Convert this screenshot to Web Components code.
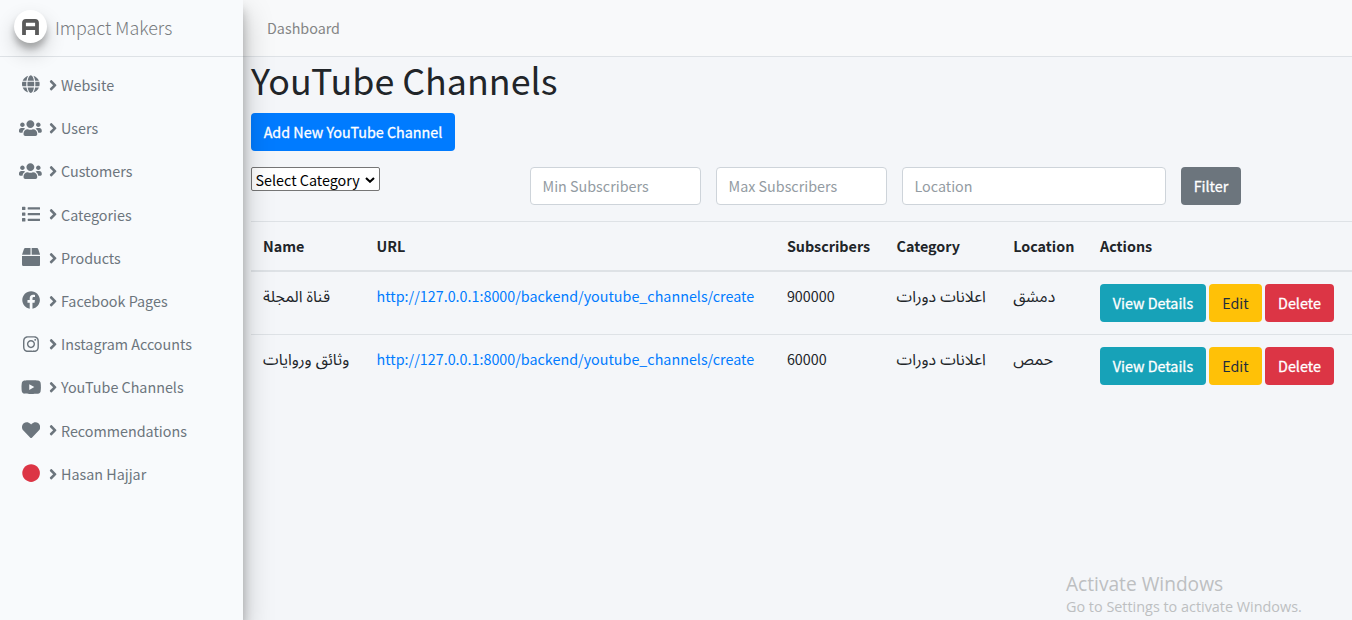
<!DOCTYPE html>
<html lang="en">
<head>
<meta charset="utf-8">
<title>YouTube Channels</title>
<style>
html,body{margin:0;height:100%;overflow:hidden}
body{background:#f4f6f9;color:#212529;font:14.33px/24px "Noto Sans CJK SC","DejaVu Sans",sans-serif}
</style>
</head>
<body>
<admin-page></admin-page>
<script>
const ICONS={
globe:[496,'M336.5 160C322 70.7 287.8 8 248 8s-74 62.7-88.5 152h177zM152 256c0 22.2 1.2 43.5 3.3 64h185.3c2.1-20.5 3.3-41.8 3.3-64s-1.2-43.5-3.3-64H155.3c-2.1 20.5-3.3 41.8-3.3 64zm324.7-96c-28.6-67.9-86.5-120.4-158-141.6 24.4 33.8 41.2 84.7 50 141.6h108zM177.2 18.4C105.8 39.6 47.8 92.1 19.3 160h108c8.7-56.9 25.5-107.8 49.9-141.6zM487.4 192H372.7c2.1 21 3.3 42.5 3.3 64s-1.2 43-3.3 64h114.6c5.5-20.5 8.6-41.8 8.6-64s-3.1-43.5-8.5-64zM120 256c0-21.5 1.2-43 3.3-64H8.6C3.2 212.5 0 233.8 0 256s3.2 43.5 8.6 64h114.6c-2-21-3.2-42.5-3.2-64zm39.5 96c14.5 89.3 48.7 152 88.5 152s74-62.7 88.5-152h-177zm159.3 141.6c71.4-21.2 129.4-73.7 158-141.6h-108c-8.8 56.9-25.6 107.8-50 141.6zM19.3 352c28.6 67.9 86.5 120.4 158 141.6-24.4-33.8-41.2-84.7-50-141.6h-108z'],
users:[640,'M96 224c35.3 0 64-28.7 64-64s-28.7-64-64-64-64 28.7-64 64 28.7 64 64 64zm448 0c35.3 0 64-28.7 64-64s-28.7-64-64-64-64 28.7-64 64 28.7 64 64 64zm32 32h-64c-17.6 0-33.5 7.1-45.1 18.6 40.3 22.1 68.9 62 75.1 109.4h66c17.7 0 32-14.3 32-32v-32c0-35.3-28.7-64-64-64zm-256 0c61.9 0 112-50.1 112-112S381.9 32 320 32 208 82.1 208 144s50.1 112 112 112zm76.8 32h-8.3c-20.8 10-43.9 16-68.5 16s-47.6-6-68.5-16h-8.3C179.6 288 128 339.6 128 403.2V432c0 26.5 21.5 48 48 48h288c26.5 0 48-21.5 48-48v-28.8c0-63.6-51.6-115.2-115.2-115.2zm-223.7-13.4C161.5 263.1 145.6 256 128 256H64c-35.3 0-64 28.7-64 64v32c0 17.7 14.3 32 32 32h65.9c6.3-47.4 34.9-87.3 75.2-109.4z'],
list:[512,'M80 368H16a16 16 0 0 0-16 16v64a16 16 0 0 0 16 16h64a16 16 0 0 0 16-16v-64a16 16 0 0 0-16-16zm0-320H16A16 16 0 0 0 0 64v64a16 16 0 0 0 16 16h64a16 16 0 0 0 16-16V64a16 16 0 0 0-16-16zm0 160H16a16 16 0 0 0-16 16v64a16 16 0 0 0 16 16h64a16 16 0 0 0 16-16v-64a16 16 0 0 0-16-16zm416 176H176a16 16 0 0 0-16 16v32a16 16 0 0 0 16 16h320a16 16 0 0 0 16-16v-32a16 16 0 0 0-16-16zm0-320H176a16 16 0 0 0-16 16v32a16 16 0 0 0 16 16h320a16 16 0 0 0 16-16V80a16 16 0 0 0-16-16zm0 160H176a16 16 0 0 0-16 16v32a16 16 0 0 0 16 16h320a16 16 0 0 0 16-16v-32a16 16 0 0 0-16-16z'],
box:[512,'M509.5 184.6L458.9 32.8C452.4 13.2 434.1 0 413.4 0H272v192h238.7c-.4-2.5-.4-5-1.2-7.4zM240 0H98.6c-20.7 0-39 13.2-45.5 32.8L2.5 184.6c-.8 2.4-.8 4.9-1.2 7.4H240V0zM0 224v240c0 26.5 21.5 48 48 48h416c26.5 0 48-21.5 48-48V224H0z'],
facebook:[512,'M504 256C504 119 393 8 256 8S8 119 8 256c0 123.78 90.69 226.38 209.25 245V327.69h-63V256h63v-54.64c0-62.15 37-96.48 93.67-96.48 27.14 0 55.52 4.84 55.52 4.84v61h-31.28c-30.8 0-40.41 19.12-40.41 38.73V256h68.78l-11 71.69h-57.78V501C413.31 482.38 504 379.78 504 256z'],
instagram:[448,'M224.1 141c-63.6 0-114.9 51.3-114.9 114.9s51.3 114.9 114.9 114.9S339 319.5 339 255.9 287.7 141 224.1 141zm0 189.6c-41.1 0-74.7-33.5-74.7-74.7s33.5-74.7 74.7-74.7 74.7 33.5 74.7 74.7-33.6 74.7-74.7 74.7zm146.4-194.3c0 14.9-12 26.8-26.8 26.8-14.9 0-26.8-12-26.8-26.8s12-26.8 26.8-26.8 26.8 12 26.8 26.8zm76.1 27.2c-1.7-35.9-9.9-67.7-36.2-93.9-26.2-26.2-58-34.4-93.9-36.2-37-2.1-147.9-2.1-184.9 0-35.8 1.7-67.6 9.9-93.9 36.1s-34.4 58-36.2 93.9c-2.1 37-2.1 147.9 0 184.9 1.7 35.9 9.9 67.7 36.2 93.9s58 34.4 93.9 36.2c37 2.1 147.9 2.1 184.9 0 35.9-1.7 67.7-9.9 93.9-36.2 26.2-26.2 34.4-58 36.2-93.9 2.1-37 2.1-147.8 0-184.8zM398.8 388c-7.8 19.6-22.9 34.7-42.6 42.6-29.5 11.7-99.5 9-132.1 9s-102.7 2.6-132.1-9c-19.6-7.8-34.7-22.9-42.6-42.6-11.7-29.5-9-99.5-9-132.1s-2.6-102.7 9-132.1c7.8-19.6 22.9-34.7 42.6-42.6 29.5-11.7 99.5-9 132.1-9s102.7-2.6 132.1 9c19.6 7.8 34.7 22.9 42.6 42.6 11.7 29.5 9 99.5 9 132.1s2.7 102.7-9 132.1z'],
youtube:[576,'M549.655 124.083c-6.281-23.65-24.787-42.276-48.284-48.597C458.781 64 288 64 288 64S117.22 64 74.629 75.486c-23.497 6.322-42.003 24.947-48.284 48.597-11.412 42.867-11.412 132.305-11.412 132.305s0 89.438 11.412 132.305c6.281 23.65 24.787 41.5 48.284 47.821C117.22 448 288 448 288 448s170.78 0 213.371-11.486c23.497-6.321 42.003-24.171 48.284-47.821 11.412-42.867 11.412-132.305 11.412-132.305s0-89.438-11.412-132.305zm-317.51 213.508V175.185l142.739 81.205-142.739 81.201z'],
heart:[512,'M462.3 62.6C407.5 15.9 326 24.3 275.7 76.2L256 96.5l-19.7-20.3C186.1 24.3 104.5 15.9 49.7 62.6c-62.8 53.6-66.1 149.8-9.9 207.9l193.5 199.8c12.5 12.9 32.8 12.9 45.3 0l193.5-199.8c56.3-58.1 53-154.3-9.8-207.9z'],
circle:[512,'M256 8C119 8 8 119 8 256s111 248 248 248 248-111 248-248S393 8 256 8z'],
angle:[256,'M224.3 273l-136 136c-9.4 9.4-24.6 9.4-33.9 0l-22.6-22.6c-9.4-9.4-9.4-24.6 0-33.9l96.4-96.4-96.4-96.4c-9.4-9.4-9.4-24.6 0-33.9L54.3 103c9.4-9.4 24.6-9.4 33.9 0l136 136c9.5 9.4 9.5 24.6.1 34z']
};
// Registers an element whose shadow markup is a string, or a function of the element's attributes.
const define=(name,html)=>customElements.define(name,class extends HTMLElement{
  constructor(){super();this.attachShadow({mode:'open'}).innerHTML=typeof html==='function'?'':html;}
  connectedCallback(){if(typeof html==='function')this.shadowRoot.innerHTML=html(this);}
});
define('fa-icon',el=>{const [w,d]=ICONS[el.getAttribute('name')],s=+el.getAttribute('size')||18.2;
  return `<style>:host{display:inline-flex}svg{display:block;height:${s}px;width:${w/512*s}px;fill:currentColor}</style><svg viewBox="0 0 ${w} 512"><path d="${d}"/></svg>`;});
define('nav-item',el=>`<style>
:host{display:flex;align-items:center;height:43.2px;color:#6c757d}
.i{display:flex;justify-content:center;width:28px;margin:-1.2px 0 0 16.8px}
.a{margin-left:4.7px;width:11.5px}
</style><span class="i"><fa-icon name="${el.getAttribute('icon')}" style="color:${el.getAttribute('tint')||'inherit'}"></fa-icon></span><fa-icon class="a" name="angle" size="16.5"></fa-icon><slot></slot>`);
define('brand-link',`<style>
:host{display:flex;align-items:center;height:56px;border-bottom:1px solid #dee2e6;color:#777b7e}
.logo{width:33px;height:33px;margin:-3px 8px 0 14px;border-radius:50%;background:#fff;box-shadow:0 10px 20px rgba(0,0,0,.19),0 6px 6px rgba(0,0,0,.23)}
svg{display:block}
.t{font-size:17.9px;font-weight:300;margin-top:-2px}
</style><span class="logo"><svg width="33" height="33" viewBox="0 0 33 33"><path d="M10 25V12.8Q10 10.8 12 10.8H21Q23 10.8 23 12.8V25M10 18.2H23" fill="none" stroke="#5a5a5a" stroke-width="3.8"/></svg></span><span class="t"><slot></slot></span>`);
define('side-bar',`<style>
:host{display:block;width:243px;height:620px;background:#f8fafc;position:relative;z-index:2;box-shadow:0 14px 28px rgba(0,0,0,.25),0 10px 10px rgba(0,0,0,.22)}
nav{padding-top:6.5px}
</style><brand-link>Impact Makers</brand-link><nav><slot></slot></nav>`);
define('top-bar',`<style>:host{display:flex;align-items:center;height:56px;padding-left:24px;background:#f8f9fa;border-bottom:1px solid #dee2e6;color:#848585}</style><slot></slot>`);
define('ui-button',el=>{const c={primary:['#007bff','#fff'],secondary:['#6c757d','#fff'],info:['#17a2b8','#fff'],warning:['#ffc107','#1f2d3d'],danger:['#dc3545','#fff']}[el.getAttribute('kind')];
return `<style>:host{display:inline-flex;box-sizing:border-box;justify-content:center;align-items:center;height:38px;border-radius:4px;background:${c[0]};color:${c[1]};-webkit-text-stroke:${el.getAttribute('kind')=='warning'?0:.3}px;white-space:nowrap}</style><slot></slot>`});
define('text-field',el=>`<style>:host{display:block}input{display:block;box-sizing:border-box;width:100%;height:38px;padding:5px 12px 7px 11.5px;border:1px solid #ced4da;border-radius:4px;background:#fff;font:inherit}input::placeholder{color:#939ba2;opacity:1}</style><input placeholder="${el.getAttribute('placeholder')}">`);
define('category-select',`<style>
:host{display:grid;grid-template-columns:1fr 10px;align-items:center;box-sizing:border-box;width:129px;height:24px;padding-right:4px;border:1px solid #767676;border-radius:2px;background:#fff;overflow:hidden}
select{appearance:none;width:100%;height:24px;margin:0;font:inherit;background:none;color:#000;border:0;padding:0 0 0 3.5px}
</style><select><option>Select Category</option></select><svg width="10" height="6" viewBox="0 0 10 6"><path d="M1 .9 5 4.7 9 .9" fill="none" stroke="#000" stroke-width="2.1"/></svg>`);
define('filter-bar',`<style>
:host{display:grid;grid-template-columns:264px 171px 171px 264px 60px;column-gap:15px;margin-top:16px;height:54px;align-items:start}
</style><category-select></category-select><text-field placeholder="Min Subscribers"></text-field><text-field placeholder="Max Subscribers"></text-field><text-field placeholder="Location"></text-field><ui-button kind="secondary">Filter</ui-button>`);
const GRID='display:grid;grid-template-columns:113.5px 410.4px 109.7px 116.6px 86.8px 264px;';
define('table-head',`<style>:host{${GRID}border-top:1px solid #dee2e6;border-bottom:2px solid #dee2e6;height:48px;align-items:center;font-weight:700}span{padding-left:12px}</style><span>Name</span><span>URL</span><span>Subscribers</span><span>Category</span><span>Location</span><span>Actions</span>`);
define('channel-row',el=>{const g=n=>el.getAttribute(n);return `<style>:host{${GRID}height:62px}:host(:not([first])){border-top:1px solid #dee2e6}
.c{padding:12px 0 0 12px}a{color:#007bff;text-decoration:none}.c.ar{font-family:"Noto Sans Arabic","Noto Sans",sans-serif;font-size:15.8px;padding-top:13px}.act{display:flex;gap:3px}
</style><span class="c ar"><bdi>${g('name')}</bdi></span><span class="c"><a>http://127.0.0.1:8000/backend/youtube_channels/create</a></span><span class="c">${g('subs')}</span><span class="c ar"><bdi>${g('category')}</bdi></span><span class="c ar"><bdi>${g('location')}</bdi></span><span class="c act"><ui-button kind="info" style="width:106px">View Details</ui-button><ui-button kind="warning" style="width:53px">Edit</ui-button><ui-button kind="danger" style="width:69px">Delete</ui-button></span>`});
define('os-notice',`<style>:host{position:absolute;left:1066px;top:571px;z-index:5;color:#bdbfc1;font-family:"Open Sans",sans-serif;white-space:nowrap}.a{font-size:19.15px;line-height:26px}.b{font-size:14.4px;line-height:20px}</style><div class="a">Activate Windows</div><div class="b">Go to Settings to activate Windows.</div>`);
define('admin-page',`<style>
:host{display:grid;grid-template-columns:243px 1fr;height:620px;overflow:hidden;position:relative}
main{padding-left:8px}
h1{margin:0;font-size:35.8px;line-height:44px;font-weight:400;height:56px}
.add{width:204px;display:flex}
</style>
<side-bar>
<nav-item icon="globe">Website</nav-item><nav-item icon="users">Users</nav-item><nav-item icon="users">Customers</nav-item><nav-item icon="list">Categories</nav-item><nav-item icon="box">Products</nav-item><nav-item icon="facebook">Facebook Pages</nav-item><nav-item icon="instagram">Instagram Accounts</nav-item><nav-item icon="youtube">YouTube Channels</nav-item><nav-item icon="heart">Recommendations</nav-item><nav-item icon="circle" tint="#dc3545">Hasan Hajjar</nav-item>
</side-bar>
<div><top-bar>Dashboard</top-bar>
<main><h1>YouTube Channels</h1><ui-button class="add" kind="primary">Add New YouTube Channel</ui-button>
<filter-bar></filter-bar>
<table-head></table-head>
<channel-row first name="قناة المجلة" subs="900000" category="اعلانات دورات" location="دمشق"></channel-row>
<channel-row name="وثائق وروايات" subs="60000" category="اعلانات دورات" location="حمص"></channel-row>
</main></div>
<os-notice></os-notice>`);
</script>
</body>
</html>
